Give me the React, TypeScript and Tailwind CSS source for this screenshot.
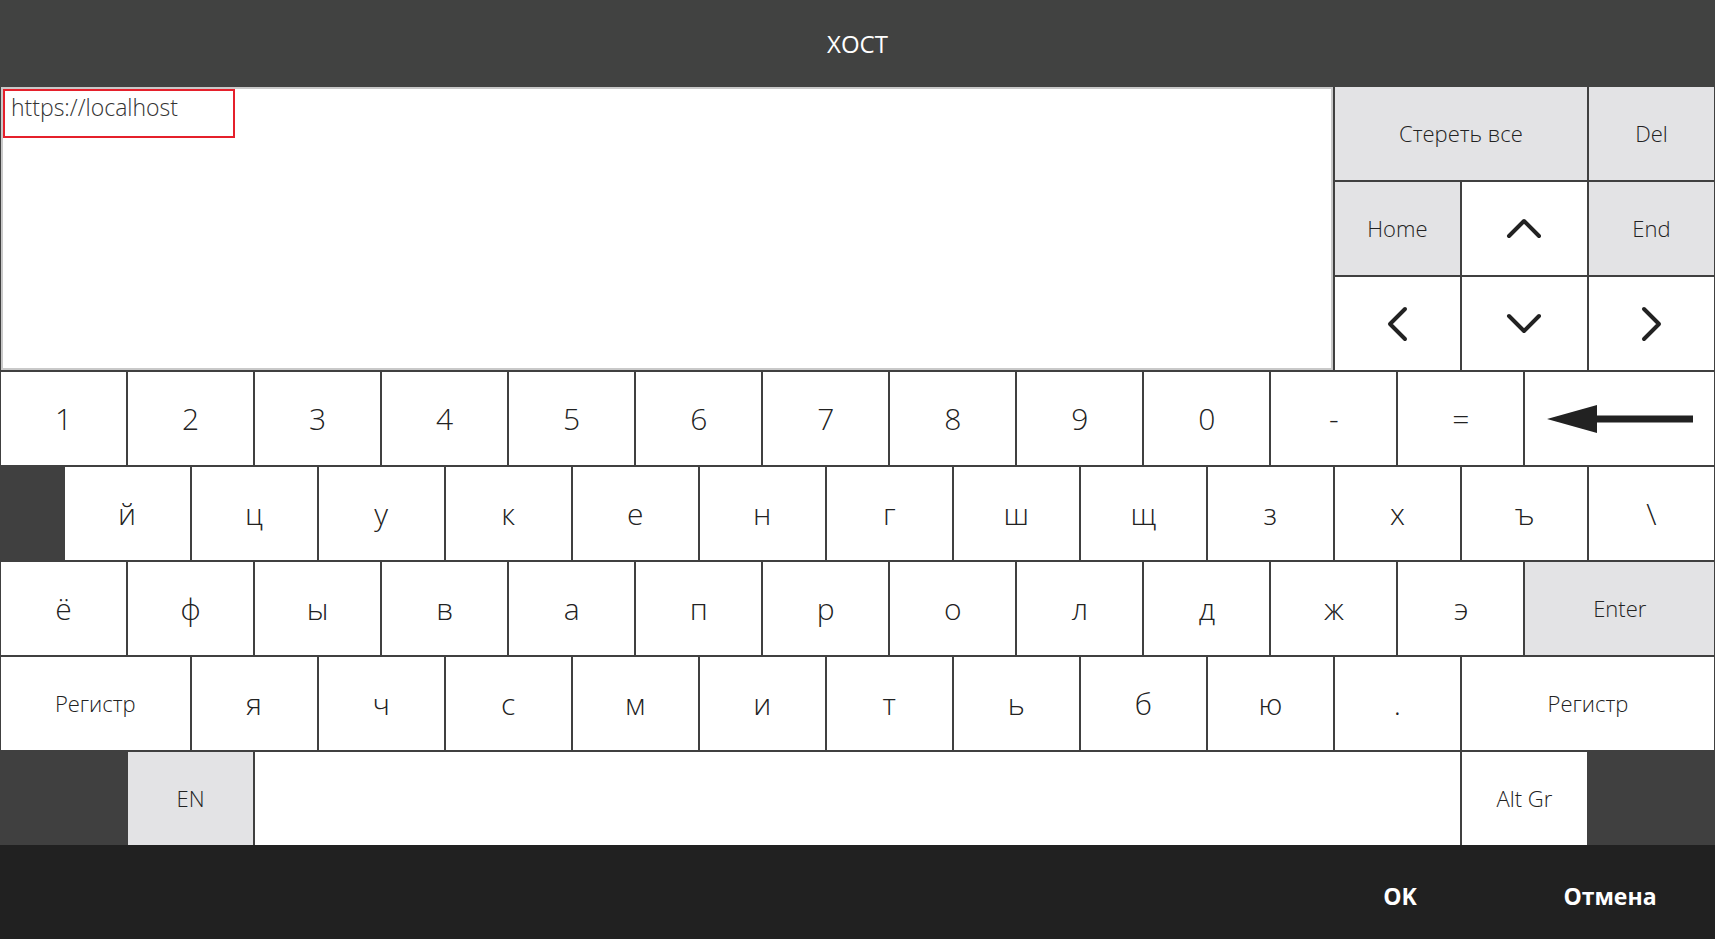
import type { ReactNode } from "react"

type Tone = "white" | "gray"

const span: Record<number, string> = {
  2: "col-span-2",
  3: "col-span-3",
  4: "col-span-4",
  19: "col-span-19",
}

function Key({
  children,
  cols = 2,
  tone = "white",
  size = "text-[30px]",
  start,
}: {
  children?: ReactNode
  cols?: number
  tone?: Tone
  size?: string
  start?: string
}) {
  return (
    <button
      className={`${span[cols]} ${start ?? ""} flex items-center justify-center font-light text-[#222] ${size} ${
        tone === "gray" ? "bg-[#e3e3e5]" : "bg-white"
      }`}
    >
      {children}
    </button>
  )
}

function Chevron({ dir }: { dir: "up" | "down" | "left" | "right" }) {
  const pts = {
    up: "3,19 18,4 33,19",
    down: "3,4 18,19 33,4",
    left: "19,3 4,18 19,33",
    right: "4,3 19,18 4,33",
  }[dir]
  const wide = dir === "up" || dir === "down"
  return (
    <svg width={wide ? 36 : 23} height={wide ? 23 : 36} viewBox={wide ? "0 0 36 23" : "0 0 23 36"}>
      <polyline points={pts} fill="none" stroke="#222" strokeWidth={4} strokeLinecap="round" strokeLinejoin="round" />
    </svg>
  )
}

function BackArrow() {
  return (
    <svg width="146" height="30" viewBox="0 0 146 30">
      <polygon points="0,15 50,1 50,29" fill="#222" />
      <rect x="48" y="11.5" width="98" height="7" fill="#222" />
    </svg>
  )
}

const numbers = ["1", "2", "3", "4", "5", "6", "7", "8", "9", "0", "-", "="]
const top = ["й", "ц", "у", "к", "е", "н", "г", "ш", "щ", "з", "х", "ъ", "\\"]
const home = ["ё", "ф", "ы", "в", "а", "п", "р", "о", "л", "д", "ж", "э"]
const bottom = ["я", "ч", "с", "м", "и", "т", "ь", "б", "ю", "."]

export default function App() {
  return (
    <div className="flex h-screen w-full flex-col bg-[#404040] font-['Open_Sans','Noto_Sans',sans-serif]">
      <header className="flex h-[87px] shrink-0 items-center justify-center bg-[#414241] text-[24px] text-white">
        ХОСТ
      </header>

      <div className="grid flex-1 grid-cols-[repeat(27,minmax(0,1fr))] grid-rows-8 gap-[2px] px-[1px]">
        <div className="col-span-21 row-span-3 border-2 border-[#c9c9c9] bg-white">
          <div className="h-[49px] w-[232px] border-2 border-[#e5202b] px-[6px] pt-[1px] text-[23px] leading-[30px] font-light text-[#333]">
            https://localhost
          </div>
        </div>

        <Key cols={4} tone="gray" size="text-[22px]">Стереть все</Key>
        <Key tone="gray" size="text-[22px]">Del</Key>
        <Key tone="gray" size="text-[22px]">Home</Key>
        <Key><Chevron dir="up" /></Key>
        <Key tone="gray" size="text-[22px]">End</Key>
        <Key><Chevron dir="left" /></Key>
        <Key><Chevron dir="down" /></Key>
        <Key><Chevron dir="right" /></Key>

        {numbers.map((k) => (
          <Key key={k}>{k}</Key>
        ))}
        <Key cols={3}><BackArrow /></Key>

        {top.map((k, i) => (
          <Key key={k} start={i === 0 ? "col-start-2" : undefined}>{k}</Key>
        ))}

        {home.map((k) => (
          <Key key={k}>{k}</Key>
        ))}
        <Key cols={3} tone="gray" size="text-[22px]">Enter</Key>

        <Key cols={3} size="text-[22px]">Регистр</Key>
        {bottom.map((k) => (
          <Key key={k}>{k}</Key>
        ))}
        <Key cols={4} size="text-[22px]">Регистр</Key>

        <Key tone="gray" size="text-[22px]" start="col-start-3">EN</Key>
        <Key cols={19} />
        <Key size="text-[22px]">Alt Gr</Key>
      </div>

      <footer className="flex h-[94px] shrink-0 items-center justify-end bg-[#212121] pt-[8px] text-[23px] font-bold text-white">
        <button className="h-full w-[210px]">OK</button>
        <button className="h-full w-[210px]">Отмена</button>
      </footer>
    </div>
  )
}
